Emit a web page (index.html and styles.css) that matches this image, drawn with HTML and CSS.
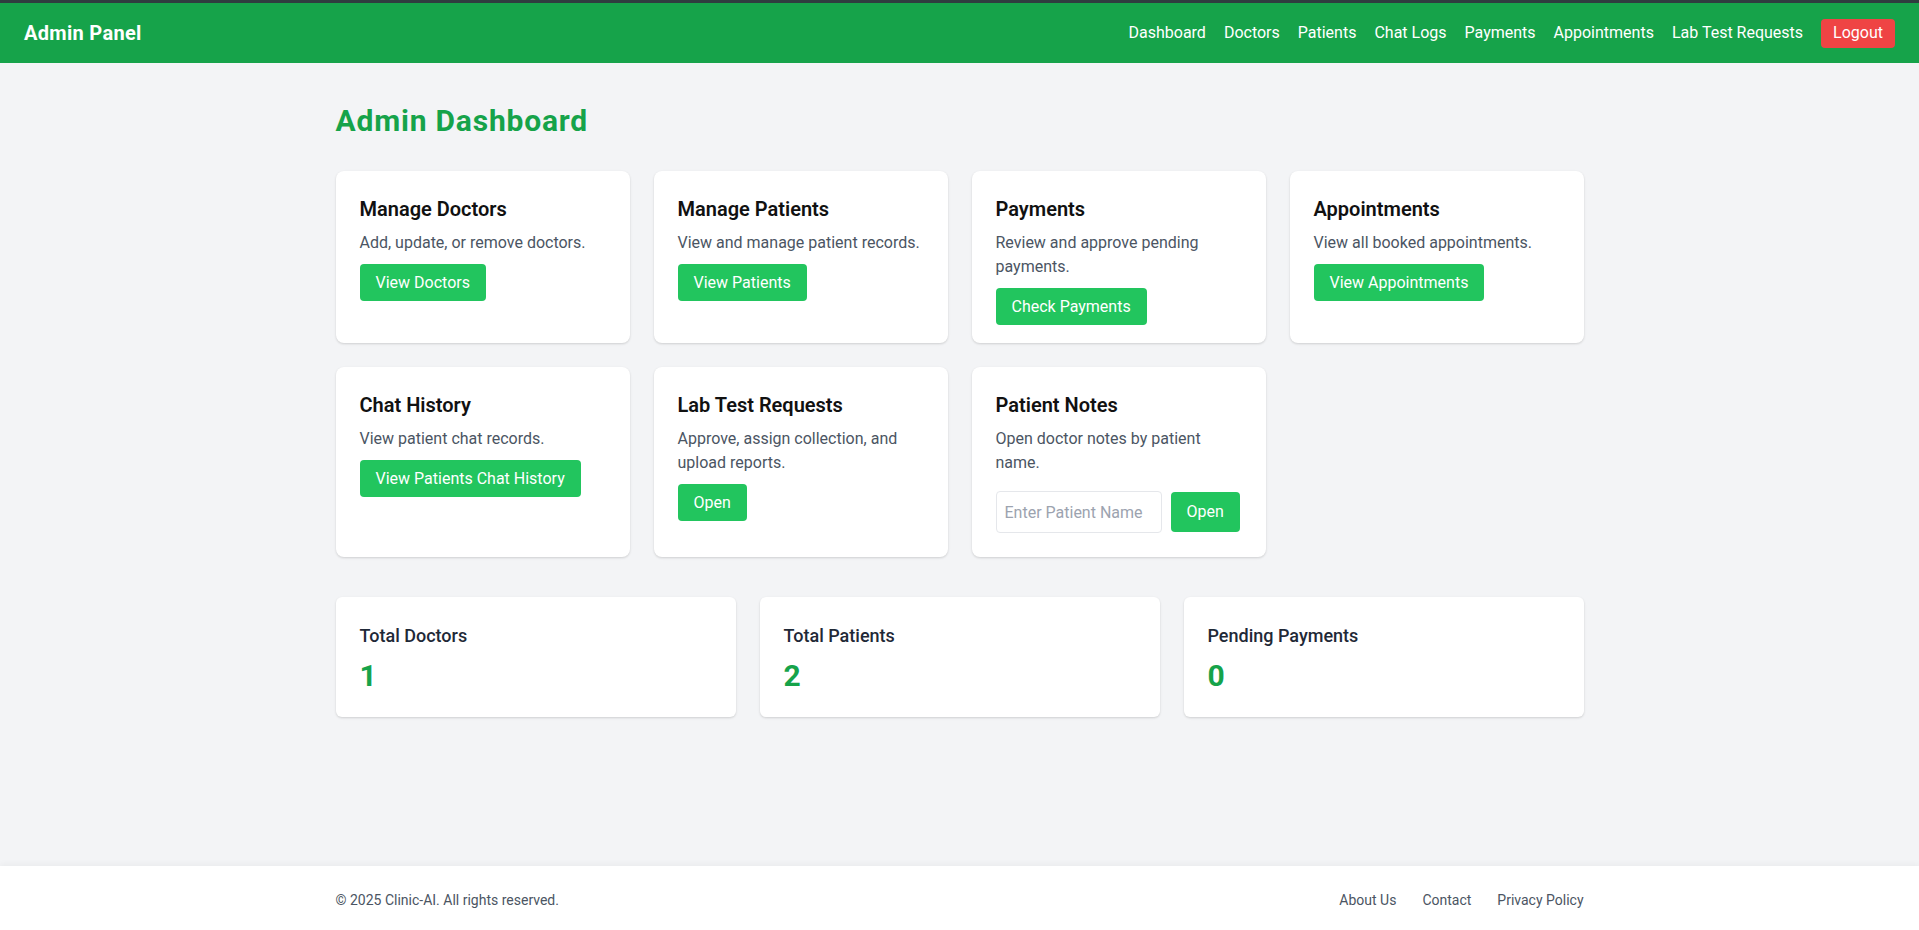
FILE: index.html
```html
<!DOCTYPE html>
<html lang="en">
<head>
<meta charset="utf-8">
<title>Admin Dashboard</title>
<link rel="stylesheet" href="styles.css">
</head>
<body>
<div class="page">
  <nav class="navbar">
    <a class="brand" href="#">Admin Panel</a>
    <div class="nav-links">
      <a class="nav-link" href="#">Dashboard</a>
      <a class="nav-link" href="#">Doctors</a>
      <a class="nav-link" href="#">Patients</a>
      <a class="nav-link" href="#">Chat Logs</a>
      <a class="nav-link" href="#">Payments</a>
      <a class="nav-link" href="#">Appointments</a>
      <a class="nav-link" href="#">Lab Test Requests</a>
      <a class="nav-link logout" href="#">Logout</a>
    </div>
  </nav>

  <main class="main">
    <h1 class="page-title">Admin Dashboard</h1>

    <div class="card-grid">
      <div class="card">
        <h2 class="card-title">Manage Doctors</h2>
        <p class="card-desc">Add, update, or remove doctors.</p>
        <a class="btn" href="#">View Doctors</a>
      </div>
      <div class="card">
        <h2 class="card-title">Manage Patients</h2>
        <p class="card-desc">View and manage patient records.</p>
        <a class="btn" href="#">View Patients</a>
      </div>
      <div class="card">
        <h2 class="card-title">Payments</h2>
        <p class="card-desc">Review and approve pending payments.</p>
        <a class="btn" href="#">Check Payments</a>
      </div>
      <div class="card">
        <h2 class="card-title">Appointments</h2>
        <p class="card-desc">View all booked appointments.</p>
        <a class="btn" href="#">View Appointments</a>
      </div>
      <div class="card">
        <h2 class="card-title">Chat History</h2>
        <p class="card-desc">View patient chat records.</p>
        <a class="btn" href="#">View Patients Chat History</a>
      </div>
      <div class="card">
        <h2 class="card-title">Lab Test Requests</h2>
        <p class="card-desc">Approve, assign collection, and upload reports.</p>
        <a class="btn" href="#">Open</a>
      </div>
      <div class="card">
        <h2 class="card-title">Patient Notes</h2>
        <p class="card-desc">Open doctor notes by patient name.</p>
        <form class="notes-form">
          <input class="notes-input" type="text" placeholder="Enter Patient Name">
          <button class="notes-btn" type="button">Open</button>
        </form>
      </div>
    </div>

    <div class="stats-grid">
      <div class="stat-card">
        <h3 class="stat-label">Total Doctors</h3>
        <p class="stat-value">1</p>
      </div>
      <div class="stat-card">
        <h3 class="stat-label">Total Patients</h3>
        <p class="stat-value">2</p>
      </div>
      <div class="stat-card">
        <h3 class="stat-label">Pending Payments</h3>
        <p class="stat-value">0</p>
      </div>
    </div>
  </main>

  <footer class="footer">
    <div class="footer-inner">
      <p class="copyright">© 2025 Clinic-AI. All rights reserved.</p>
      <div class="footer-links">
        <a class="footer-link" href="#">About Us</a>
        <a class="footer-link" href="#">Contact</a>
        <a class="footer-link" href="#">Privacy Policy</a>
      </div>
    </div>
  </footer>
</div>
</body>
</html>
```

FILE: styles.css
```css
* {
  box-sizing: border-box;
}

body {
  margin: 0;
  font-family: Roboto, "Liberation Sans", sans-serif;
  background: #f3f4f6;
  color: #111827;
}

.page {
  display: flex;
  flex-direction: column;
  min-height: 100vh;
}

/* Navbar */
.navbar {
  border-top: 3px solid #2f3d3f;
  background: #16a34a;
  height: 63px;
  display: flex;
  align-items: center;
  justify-content: space-between;
  padding: 0 24px;
  flex-shrink: 0;
}

.brand {
  font-size: 20px;
  line-height: 28px;
  font-weight: 700;
  color: #ffffff;
  text-decoration: none;
  letter-spacing: 0.3px;
}

.nav-links {
  display: flex;
  align-items: center;
  gap: 18px;
}

.nav-link {
  color: #ffffff;
  font-size: 16px;
  line-height: 24px;
  text-decoration: none;
}

.logout {
  background: #ef4444;
  border-radius: 4px;
  padding: 2.5px 12px;
}

/* Main */
.main {
  width: 1248px;
  margin: 0 auto;
  padding-top: 40px;
  flex: 1 0 auto;
  min-height: 803px;
}

.page-title {
  margin: 0 0 32px;
  font-size: 30px;
  line-height: 36px;
  font-weight: 700;
  color: #16a34a;
  letter-spacing: 0.8px;
}

.card-grid {
  display: grid;
  grid-template-columns: repeat(4, 1fr);
  gap: 24px;
}

.card {
  background: #ffffff;
  border-radius: 8px;
  box-shadow: 0 1px 3px rgba(0, 0, 0, 0.1), 0 1px 2px rgba(0, 0, 0, 0.06);
  padding: 24px;
  line-height: 24px;
}

.card-title {
  margin: 0 0 8px;
  font-size: 20px;
  line-height: 28px;
  font-weight: 600;
  color: #111111;
}

.card-desc {
  margin: 0 0 16px;
  font-size: 16px;
  line-height: 24px;
  color: #4b5563;
}

.btn {
  background: #22c55e;
  color: #ffffff;
  padding: 9px 16px;
  border-radius: 4px;
  text-decoration: none;
  font-size: 16px;
  line-height: 24px;
}

.notes-form {
  display: flex;
  align-items: center;
  gap: 9px;
}

.notes-input {
  width: 166px;
  height: 42px;
  padding: 8px;
  border: 1px solid #e5e7eb;
  border-radius: 4px;
  font-family: Roboto, "Liberation Sans", sans-serif;
  font-size: 16px;
  line-height: 24px;
  color: #111827;
  background: #ffffff;
}

.notes-input::placeholder {
  color: #9ca3af;
}

.notes-btn {
  background: #22c55e;
  color: #ffffff;
  border: 0;
  border-radius: 4px;
  padding: 8px 16px;
  font-family: Roboto, "Liberation Sans", sans-serif;
  font-size: 16px;
  line-height: 24px;
}

/* Stats */
.stats-grid {
  display: grid;
  grid-template-columns: repeat(3, 1fr);
  gap: 24px;
  margin-top: 40px;
}

.stat-card {
  background: #ffffff;
  border-radius: 6px;
  box-shadow: 0 1px 3px rgba(0, 0, 0, 0.1), 0 1px 2px rgba(0, 0, 0, 0.06);
  padding: 25px 24px 23px;
}

.stat-label {
  margin: 0;
  font-size: 18px;
  line-height: 28px;
  font-weight: 500;
  color: #1f2937;
}

.stat-value {
  margin: 8px 0 0;
  font-size: 30px;
  line-height: 36px;
  font-weight: 700;
  color: #16a34a;
}

/* Footer */
.footer {
  background: #ffffff;
  box-shadow: 0 -2px 6px rgba(0, 0, 0, 0.04);
  padding: 24px 0;
  flex-shrink: 0;
}

.footer-inner {
  width: 1248px;
  margin: 0 auto;
  display: flex;
  justify-content: space-between;
  align-items: center;
  font-size: 14px;
  line-height: 20px;
  color: #4b5563;
}

.copyright {
  margin: 0;
}

.footer-links {
  display: flex;
  gap: 26px;
}

.footer-link {
  color: #4b5563;
  text-decoration: none;
}
```
